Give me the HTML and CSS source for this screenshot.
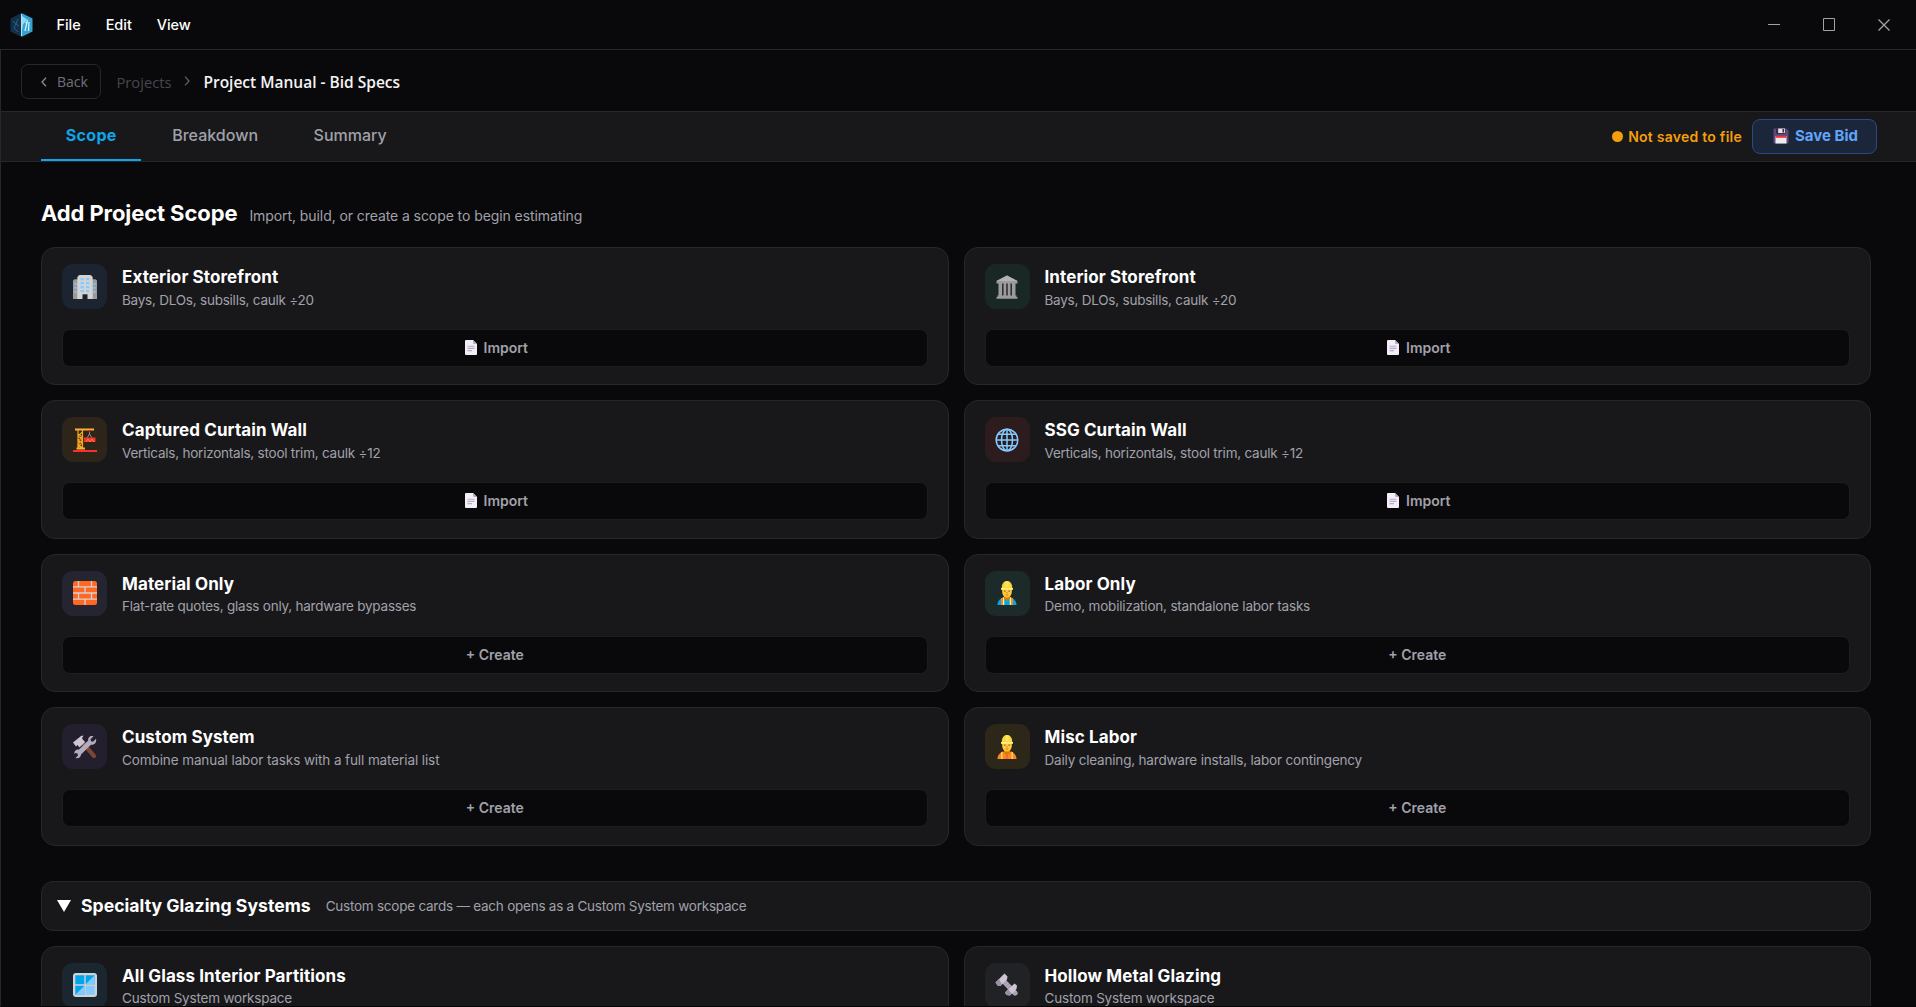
FILE: index.html
```html
<!DOCTYPE html>
<html lang="en">
<head>
<meta charset="utf-8">
<title>Project Manual - Bid Specs</title>
<link rel="stylesheet" href="styles.css">
</head>
<body>
<svg class="sprite" aria-hidden="true">
  <symbol id="page" viewBox="0 0 12 15"><path d="M1 0h7l4 4v10a1 1 0 0 1-1 1H1a1 1 0 0 1-1-1V1a1 1 0 0 1 1-1z" fill="#f3eef8"/><path d="M8 0l4 4H9a1 1 0 0 1-1-1z" fill="#b9adc6"/><path d="M2.500 6.200h7M2.500 8.400h7M2.500 10.600h4.500" stroke="#b9adc6" stroke-width="1.100"/></symbol>
  <symbol id="floppy" viewBox="0 0 16 16"><path d="M1.500 .5h12L15.500 2.500v12a1 1 0 0 1-1 1h-13a1 1 0 0 1-1-1v-13a1 1 0 0 1 1-1z" fill="#5d4a7a"/><path d="M3 .5h9.500V5a1 1 0 0 1-1 1H4a1 1 0 0 1-1-1z" fill="#3a2a4e"/><path d="M5.200 .5h6.800V5H5.200z" fill="#e6e2ea"/><path d="M9.500 1h1.600v3.500H9.500z" fill="#3a2a4e"/><path d="M2.500 8h11v7.500h-11z" fill="#ececf0"/><path d="M2.500 7.800h11v2h-11z" fill="#f8312f"/></symbol>
  <symbol id="building" viewBox="0 0 24 24"><path d="M0 5.500l1.500-1.200H5V24H0zM24 5.500l-1.500-1.200H19V24h5z" fill="#9b9b9b"/><path d="M4.300 2L6.300 0h11.400l2 2v22H4.300z" fill="#d3d3d3"/><path d="M7.500 3h3.300v2.200H7.500zM13 3h3.300v2.200H13zM7.500 7h3.300v2.200H7.500zM13 7h3.300v2.200H13zM7.500 11h3.300v2.200H7.500zM13 11h3.300v2.200H13zM7.500 15h3.300v2.200H7.500zM13 15h3.300v2.200H13zM1.500 8h2v1.800h-2zM1.500 12h2v1.800h-2zM1.500 16h2v1.800h-2zM20.500 8h2v1.800h-2zM20.500 12h2v1.800h-2zM20.500 16h2v1.800h-2z" fill="#83cbff"/><path d="M9.500 19.300h5V24h-5z" fill="#212121"/></symbol>
  <symbol id="bank" viewBox="0 0 24 24"><path d="M5 8h14v13H5z" fill="#30302f"/><path d="M12 .5l10.500 5.500V8.500H1.500V6zM3.500 8.500H7V21H3.500zM8.600 8.500h2.600V21H8.600zM12.800 8.500h2.600V21h-2.600zM17 8.500h3.500V21H17zM2.500 20.500h19v1.500h1v1.800h-21V22h1z" fill="#9b9b9b"/><path d="M12 .5l10.500 5.500H1.500z" fill="#b4b2b2"/></symbol>
  <symbol id="crane" viewBox="0 0 24 24"><path d="M5 2v19M9.500 2v19M5 6l4.500 3L5 12l4.500 3L5 18l4.500 3M9.500 4L5 8l4.500 4L5 16l4.500 4" fill="none" stroke="#f9a71f" stroke-width="1.200"/><path d="M2 .5h19v2H2zM3.500 19.500H12v2H3.500z" fill="#ffb02e"/><path d="M16.500 2.500V6M16.500 6l-2.500 4M16.500 6l2.500 4" stroke="#9b9b9b" stroke-width=".9" fill="none"/><circle cx="16.500" cy="3" r="1" fill="#ca0b4a"/><path d="M11 9.500h11.500V14H11z" fill="#f8312f"/><path d="M13 14l2-3 2 3 2-3 2 3" stroke="#ff822d" fill="none"/><path d="M0 22h24v2H0z" fill="#f8312f"/></symbol>
  <symbol id="globe" viewBox="0 0 24 24"><g fill="none" stroke="#83cbff" stroke-width="1.500"><circle cx="12" cy="12" r="10.800"/><ellipse cx="12" cy="12" rx="5.500" ry="10.800"/><path d="M12 1v22M1 12h22M3.200 6.200h17.600M3.200 17.800h17.600"/></g></symbol>
  <symbol id="brick" viewBox="0 0 24 24"><rect width="24" height="24" rx="2.500" fill="#ff6723"/><path d="M0 5.800h24M0 12h24M0 18.200h24M5.500 0v5.800M18.500 0v5.800M12 5.800V12M5.500 12v6.200M18.500 12v6.200M12 18.200V24" stroke="#d3d3d3" stroke-width="1.300"/></symbol>
  <symbol id="helmet-head" viewBox="0 0 24 24"><path d="M9 13h6v5l-3 2-3-2z" fill="#d67d00"/><path d="M7.200 6h9.600v5a4.800 5.500 0 0 1-9.600 0z" fill="#ffc83d"/><path d="M9.300 10.200h1.200M13.500 10.200h1.200" stroke="#7d4533" stroke-width="1.200"/><path d="M11.300 11.800h1.400M10.600 14h2.800" stroke="#d67d00"/><path d="M6.800 8C6.500 3 8.500 0 12 0s5.500 3 5.200 8z" fill="#fcd53f"/><path d="M6 7h12v1.800H6z" fill="#fff478"/><path d="M10.500.2h3V6h-3z" fill="#ffe45c"/></symbol>
  <symbol id="worker" viewBox="0 0 24 24"><path d="M2.500 24c0-4 2.500-6.500 6-7.500l3.500 2 3.500-2c3.500 1 6 3.500 6 7.500z" fill="#00a6ed"/><path d="M6 17.300l2.500-1V24H6zM15.500 16.300l2.500 1V24h-2.500z" fill="#ff822d"/><path d="M8 16.300h1.300V24H8zM14.700 16.300H16V24h-1.300z" fill="#fff478"/><use href="#helmet-head"/></symbol>
  <symbol id="worker-orange" viewBox="0 0 24 24"><path d="M2.500 24c0-4 2.500-6.500 6-7.500l3.500 2 3.500-2c3.500 1 6 3.500 6 7.500z" fill="#ff822d"/><path d="M6 17.300l1.600-.8V24H6zM16.400 16.500l1.600.8V24h-1.600z" fill="#fcd53f"/><path d="M11.600 18h.8v6h-.8z" fill="#d3581a"/><use href="#helmet-head"/></symbol>
  <symbol id="tools" viewBox="0 0 24 24"><path d="M8 9l3-3 11.500 13.500a2 2 0 0 1-3 3z" fill="#7d4533"/><path d="M0 7.500L8 1l2.500-.5L9 3.500l3 3.500-5.500 5.500L4.500 10 3 11.500z" fill="#cdc4d6"/><path d="M20.500 1.200l-3 3 .5 2 2 .5 3-3c1 3.500-1.500 6.500-5 6L8 19.500c0 3-3 4.500-5.500 3.500L5 20.500l-.5-2-2-.5L1.500 19C1 15.500 3.500 14 6 14.500L15.200 5.500c-.5-3 2.300-5.500 5.300-4.300z" fill="#b4acbc"/></symbol>
  <symbol id="window" viewBox="0 0 24 24"><rect width="24" height="24" rx="3" fill="#d3d3d3"/><path d="M2.300 2.300h9v9h-9zM12.700 2.300h9v9h-9zM2.300 12.700h9v9h-9z" fill="#00a6ed"/><path d="M12.700 12.700h9v9h-9zM21.700 2.300v9h-9zM11.300 12.700v9h-9z" fill="#83cbff"/></symbol>
  <symbol id="bolt" viewBox="0 0 24 24"><path d="M7 10l3.500-3.500L22.500 19c.8 2-1 4-3.500 3.500z" fill="#b4acbc"/><path d="M9 11l3-2M11 13l3-2M13 15l3-2M19 21l3-2" stroke="#998ea4" stroke-width="1"/><path d="M.5 9.500L9.500.5l3 3-.5 3L5.500 13l-3-.5z" fill="#cdc4d6"/><path d="M.5 9.500l3.500-3.500 3 5.500L5.500 13l-3-.5z" fill="#998ea4"/><path d="M10 19.500l9.500-9 2.500 2-.5 3.500-6.500 6.500-3.500-.5z" fill="#cdc4d6"/><path d="M10 19.500l3-3.500 3.500 4.500-2 2-3-.5z" fill="#998ea4"/></symbol>
</svg>

<header class="titlebar">
  <svg class="logo" viewBox="0 0 23 24"><path d="M11.500 0L.5 5.500v13l11 5.500z" fill="#12304a"/><path d="M11.500 0v24l11-5.500v-13z" fill="#35a3d0"/><path d="M12 3l5 3.500-4 5-1 6z" fill="#8fdcf5"/><path d="M17.500 7l-2.500 11M15.500 10l1.500-1M19 9l-.5 9" stroke="#d8f5ff" stroke-width="1.200" fill="none"/><path d="M3 8l3 3-2 4 4 4M8 6l-2 5 3 2" stroke="#2d617f" fill="none"/><path d="M11.500 1v22" stroke="#c9eefb" stroke-width=".9"/></svg>
  <nav class="menu"><span>File</span><span>Edit</span><span>View</span></nav>
  <div class="controls">
    <svg viewBox="0 0 13 13"><path d="M0 6.500h12" stroke="#a1a1aa"/></svg>
    <svg viewBox="0 0 13 13"><path d="M.5.5h11v12H.5z" fill="none" stroke="#a1a1aa"/></svg>
    <svg viewBox="0 0 13 13"><path d="M.5 1.500l11 11M11.500 1.500l-11 11" stroke="#a1a1aa" stroke-width="1.300"/></svg>
  </div>
</header>

<div class="app">
  <div class="crumbs">
    <button class="back"><svg viewBox="0 0 6 10"><path d="M5 .7L1 5l4 4.300" fill="none" stroke="#8a8a92" stroke-width="1.300"/></svg>Back</button>
    <span class="crumb">Projects</span>
    <svg class="sep" viewBox="0 0 6 10"><path d="M1 .7L5 5 1 9.300" fill="none" stroke="#63636b" stroke-width="1.200"/></svg>
    <strong class="current">Project Manual - Bid Specs</strong>
  </div>

  <div class="tabbar">
    <div class="tab active">Scope</div>
    <div class="tab">Breakdown</div>
    <div class="tab">Summary</div>
    <div class="status"><i class="dot"></i>Not saved to file</div>
    <button class="save"><svg><use href="#floppy"/></svg>Save Bid</button>
  </div>

  <main class="content">
    <div class="heading"><h1>Add Project Scope</h1><p>Import, build, or create a scope to begin estimating</p></div>

    <section class="grid">
      <article class="card"><div class="top"><div class="icon navy"><svg><use href="#building"/></svg></div><div><h2>Exterior Storefront</h2><p class="tight">Bays, DLOs, subsills, caulk ÷20</p></div></div><button class="action"><svg><use href="#page"/></svg>Import</button></article>
      <article class="card"><div class="top"><div class="icon green"><svg><use href="#bank"/></svg></div><div><h2>Interior Storefront</h2><p class="tight">Bays, DLOs, subsills, caulk ÷20</p></div></div><button class="action"><svg><use href="#page"/></svg>Import</button></article>
      <article class="card"><div class="top"><div class="icon amber"><svg><use href="#crane"/></svg></div><div><h2>Captured Curtain Wall</h2><p class="tight">Verticals, horizontals, stool trim, caulk ÷12</p></div></div><button class="action"><svg><use href="#page"/></svg>Import</button></article>
      <article class="card"><div class="top"><div class="icon red"><svg><use href="#globe"/></svg></div><div><h2>SSG Curtain Wall</h2><p class="tight">Verticals, horizontals, stool trim, caulk ÷12</p></div></div><button class="action"><svg><use href="#page"/></svg>Import</button></article>
      <article class="card"><div class="top"><div class="icon slate"><svg><use href="#brick"/></svg></div><div><h2>Material Only</h2><p class="tight">Flat-rate quotes, glass only, hardware bypasses</p></div></div><button class="action">+ Create</button></article>
      <article class="card"><div class="top"><div class="icon teal"><svg><use href="#worker"/></svg></div><div><h2>Labor Only</h2><p>Demo, mobilization, standalone labor tasks</p></div></div><button class="action">+ Create</button></article>
      <article class="card"><div class="top"><div class="icon violet"><svg><use href="#tools"/></svg></div><div><h2>Custom System</h2><p class="loose">Combine manual labor tasks with a full material list</p></div></div><button class="action">+ Create</button></article>
      <article class="card"><div class="top"><div class="icon gold"><svg><use href="#worker-orange"/></svg></div><div><h2>Misc Labor</h2><p>Daily cleaning, hardware installs, labor contingency</p></div></div><button class="action">+ Create</button></article>
    </section>

    <div class="group"><svg viewBox="0 0 14 12"><path d="M0 0h14L7 12z" fill="#fff"/></svg><h2>Specialty Glazing Systems</h2><p>Custom scope cards — each opens as a Custom System workspace</p></div>

    <section class="grid">
      <article class="card"><div class="top"><div class="icon cyan"><svg><use href="#window"/></svg></div><div><h2>All Glass Interior Partitions</h2><p>Custom System workspace</p></div></div></article>
      <article class="card"><div class="top"><div class="icon gray"><svg><use href="#bolt"/></svg></div><div><h2>Hollow Metal Glazing</h2><p>Custom System workspace</p></div></div></article>
    </section>
  </main>
</div>
</body>
</html>
```
FILE: styles.css
```css
* { box-sizing: border-box; margin: 0; padding: 0; }
html, body { height: 100%; overflow: hidden; }
body {
  display: flex;
  flex-direction: column;
  background: #09090b;
  color: #fff;
  font-family: Inter, "Liberation Sans", sans-serif;
}
button { font: inherit; color: inherit; background: none; }
svg { display: block; flex: none; }
.sprite { display: none; }

.titlebar {
  height: 50px;
  flex: none;
  display: flex;
  align-items: center;
  padding: 0 25px 0 10px;
  border-bottom: 1px solid #27272a;
}
.logo { width: 23px; height: 24px; }
.menu { display: flex; gap: 25px; margin-left: 23.500px; padding-bottom: 1px; font-size: 14.500px; font-weight: 500; letter-spacing: -.05px; }
.controls { margin-left: auto; display: flex; gap: 42px; }
.controls svg { width: 13px; height: 13px; }

.app {
  flex: 1;
  min-height: 0;
  display: flex;
  flex-direction: column;
  border-left: 1px solid #27272a;
  border-bottom: 1px solid #050506;
}
.crumbs {
  height: 61px;
  flex: none;
  display: flex;
  align-items: center;
  padding: 2px 20px 0;
  font-family: "Open Sans", "Noto Sans", sans-serif;
}
.back {
  width: 80px;
  height: 35px;
  display: flex;
  align-items: center;
  padding-left: 19px;
  gap: 10px;
  border: 1px solid #27272a;
  border-radius: 7px;
  color: #71717a;
  font-size: 14px;
}
.back svg, .sep { width: 6px; height: 10px; }
.sep { margin: 0 13px; transform: translateY(-1px); }
.crumb { margin-left: 15.500px; font-size: 14.700px; color: #46464d; }
.current { font-size: 15.500px; font-weight: 600; color: #f4f4f5; }

.tabbar {
  height: 51px;
  flex: none;
  display: flex;
  align-items: center;
  padding: 0 39px 0 40px;
  background: #18181b;
  border-top: 1px solid #27272a;
  border-bottom: 1px solid #27272a;
}
.tab {
  height: 49px;
  padding: 0 24.800px;
  margin-right: 6px;
  line-height: 46px;
  font-size: 16px;
  font-weight: 500;
  color: #a1a1aa;
  border-bottom: 2px solid transparent;
}
.tab.active { font-weight: 700; letter-spacing: .3px; color: #0ea5e9; border-color: #0ea5e9; }
.status {
  margin-left: auto;
  padding-bottom: 1px;
  display: flex;
  align-items: center;
  gap: 5px;
  font-size: 14px;
  font-weight: 600;
  letter-spacing: .25px;
  color: #f59e0b;
}
.dot { width: 11px; height: 11px; border-radius: 50%; background: #f59e0b; }
.save {
  width: 125px;
  height: 35px;
  margin-left: 10px;
  padding: 0 0 2px 20px;
  display: flex;
  align-items: center;
  gap: 6px;
  border: 1px solid #284a85;
  border-radius: 8px;
  background: #1c263b;
  color: #60a5fa;
  font-size: 15px;
  font-weight: 700;
}
.save svg { width: 16px; height: 16px; }

.content { flex: 1; min-height: 0; overflow: hidden; padding: 35px 45px 0 40px; }
.heading { display: flex; align-items: baseline; gap: 12px; height: 50px; line-height: 32px; }
.heading h1 { font-size: 22px; letter-spacing: -.1px; }
.heading p { font-size: 14px; letter-spacing: -.08px; color: #a1a1aa; }

.grid { display: grid; grid-template-columns: 1fr 1fr; gap: 15.400px 15px; }
.card {
  height: 138.100px;
  padding: 16px 20px;
  border: 1px solid #27272a;
  border-radius: 14px;
  background: #18181b;
}
.top { display: flex; gap: 15px; height: 65px; }
.icon {
  width: 45px;
  height: 45px;
  flex: none;
  display: grid;
  place-items: center;
  border-radius: 11px;
}
.icon svg { width: 24px; height: 24px; }
.card h2 { padding-top: 1px; font-size: 17px; line-height: 24.500px; letter-spacing: .1px; }
.card p { font-size: 13.500px; line-height: 20px; letter-spacing: -.19px; color: #a1a1aa; }
.card p.tight { letter-spacing: -.23px; }
.card p.loose { letter-spacing: -.1px; }
.action {
  width: 100%;
  height: 38px;
  padding-bottom: 1px;
  display: flex;
  align-items: center;
  justify-content: center;
  gap: 7px;
  border: 1px solid #1d1d20;
  border-radius: 8px;
  background: #09090b;
  color: #a1a1aa;
  font-size: 14px;
  font-weight: 600;
}
.action svg { width: 12px; height: 15px; margin-left: 3px; }

.navy { background: #1c2331; }
.green { background: #192825; }
.amber { background: #2d241a; }
.red { background: #2d1c1e; }
.slate { background: #252431; }
.teal { background: #1c2b29; }
.violet { background: #231f2e; }
.gold { background: #2d2719; }
.cyan { background: #1b2730; }
.gray { background: #202226; }

.group {
  height: 50px;
  margin: 35px 0 15px;
  padding: 0 15px;
  display: flex;
  align-items: center;
  border: 1px solid #27272a;
  border-radius: 12px;
  background: #18181b;
}
.group svg { width: 14px; height: 12px; }
.group h2 { margin-left: 10px; font-size: 17.600px; letter-spacing: .03px; }
.group p { margin-left: 15px; font-size: 13.500px; letter-spacing: -.24px; color: #a1a1aa; }
```
